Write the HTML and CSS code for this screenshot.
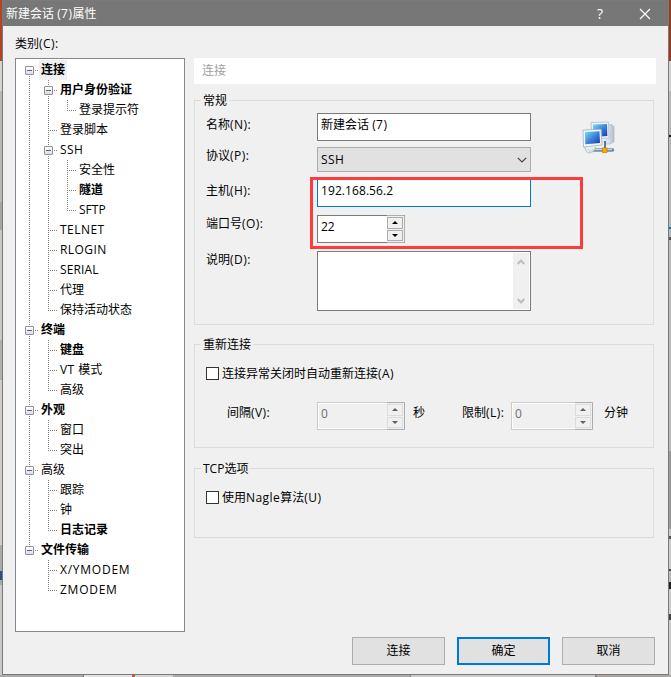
FILE: index.html
```html
<!DOCTYPE html>
<html lang="zh-CN">
<head>
<meta charset="utf-8">
<title>新建会话 (7)属性</title>
<link rel="stylesheet" href="styles.css">
</head>
<body>
<div class="desktop">
<div class="edge edge-left"></div>
<main class="dialog">
  <header class="titlebar">
    <span class="title">新建会话 <em>(7)</em>属性</span>
    <span class="help">?</span>
    <svg class="close" width="12" height="12" viewBox="0 0 12 12"><path d="M1 1 11 11M11 1 1 11" fill="none" stroke="#fff" stroke-width="1.2"/></svg>
  </header>
  <div class="content">
    <section class="sidebar">
      <div class="side-label">类别<em>(C):</em></div>
      <div class="tree">
        <div class="row b"><i class="g first box"></i><span class="sel">连接</span></div>
        <div class="row b"><i class="g v"></i><i class="g t box"></i><span>用户身份验证</span></div>
        <div class="row"><i class="g v"></i><i class="g v"></i><i class="g l"></i><span>登录提示符</span></div>
        <div class="row"><i class="g v"></i><i class="g t"></i><span>登录脚本</span></div>
        <div class="row"><i class="g v"></i><i class="g t box"></i><span><em>SSH</em></span></div>
        <div class="row"><i class="g v"></i><i class="g v"></i><i class="g t"></i><span>安全性</span></div>
        <div class="row b"><i class="g v"></i><i class="g v"></i><i class="g t"></i><span>隧道</span></div>
        <div class="row"><i class="g v"></i><i class="g v"></i><i class="g l"></i><span>SFTP</span></div>
        <div class="row"><i class="g v"></i><i class="g t"></i><span><em>TELNET</em></span></div>
        <div class="row"><i class="g v"></i><i class="g t"></i><span><em>RLOGIN</em></span></div>
        <div class="row"><i class="g v"></i><i class="g t"></i><span class="serial">SERIAL</span></div>
        <div class="row"><i class="g v"></i><i class="g t"></i><span>代理</span></div>
        <div class="row"><i class="g v"></i><i class="g l"></i><span>保持活动状态</span></div>
        <div class="row b"><i class="g t box"></i><span>终端</span></div>
        <div class="row b"><i class="g v"></i><i class="g t"></i><span>键盘</span></div>
        <div class="row"><i class="g v"></i><i class="g t"></i><span><em>VT </em>模式</span></div>
        <div class="row"><i class="g v"></i><i class="g l"></i><span>高级</span></div>
        <div class="row b"><i class="g t box"></i><span>外观</span></div>
        <div class="row"><i class="g v"></i><i class="g t"></i><span>窗口</span></div>
        <div class="row"><i class="g v"></i><i class="g l"></i><span>突出</span></div>
        <div class="row"><i class="g t box"></i><span>高级</span></div>
        <div class="row"><i class="g v"></i><i class="g t"></i><span>跟踪</span></div>
        <div class="row"><i class="g v"></i><i class="g t"></i><span>钟</span></div>
        <div class="row b"><i class="g v"></i><i class="g l"></i><span>日志记录</span></div>
        <div class="row b"><i class="g l box"></i><span>文件传输</span></div>
        <div class="row"><i class="g"></i><i class="g t"></i><span class="modem">X/YMODEM</span></div>
        <div class="row"><i class="g"></i><i class="g l"></i><span class="modem">ZMODEM</span></div>
      </div>
    </section>
    <section class="panel">
      <div class="page-title">连接</div>
      <div class="group general">
        <div class="legend">常规</div>
        <div class="general-body">
          <div class="fields">
            <div class="field name"><label>名称<em>(N):</em></label><div class="input">新建会话 <em>(7)</em></div></div>
            <div class="field protocol"><label>协议<em>(P):</em></label><div class="select"><span><em>SSH</em></span><svg width="10" height="6" viewBox="0 0 10 6"><path d="M.8.8 5 5 9.2.8" fill="none" stroke="#444" stroke-width="1.2"/></svg></div></div>
            <div class="field host"><label>主机<em>(H):</em></label><div class="input focus ip">192.168.56.2</div></div>
            <div class="field port"><label>端口号<em>(O):</em></label><div class="spin"><span>22</span><div class="arrows"><b class="up"></b><b class="down"></b></div></div></div>
            <div class="field desc"><label>说明<em>(D):</em></label><div class="textarea"><div class="scroll">
              <svg width="8" height="6" viewBox="0 0 8 6"><path d="M.7 5 4 1.5 7.3 5" fill="none" stroke="#bdbdbd" stroke-width="2"/></svg>
              <svg width="8" height="6" viewBox="0 0 8 6"><path d="M.7 1 4 4.5 7.3 1" fill="none" stroke="#bdbdbd" stroke-width="2"/></svg>
            </div></div></div>
          </div>
          <svg class="net-icon" width="34" height="34" viewBox="0 0 34 34">
            <defs>
              <linearGradient id="screen" x1="0" y1="0" x2="1" y2="1"><stop offset="0" stop-color="#7ddcf8"/><stop offset=".5" stop-color="#3f86dc"/><stop offset="1" stop-color="#1637ae"/></linearGradient>
              <linearGradient id="tower" x1="0" y1="0" x2="1" y2="0"><stop offset="0" stop-color="#eef3f7"/><stop offset="1" stop-color="#a9bccb"/></linearGradient>
            </defs>
            <path d="M25 4 30 3.5 32 5.5V21L28 23H24Z" fill="url(#tower)" stroke="#b1c0cc" stroke-width=".8"/>
            <path d="M28 9h3M28 12h3M28 15h3" stroke="#bdcbd6" stroke-width=".8"/>
            <path d="M9 1.5 26.5 1 27 17 10 18Z" fill="#edf3f8" stroke="#b3c4d1" stroke-width=".9"/>
            <path d="M11 3.5 25 3 25.3 15 11 16Z" fill="url(#screen)"/>
            <path d="M19 19h8v3h-8Z" fill="#dce5eb"/>
            <path d="M23 20v7" stroke="#527c9b" stroke-width="2"/>
            <path d="M10 29H30.5" stroke="#6d8ca1" stroke-width="3.6" stroke-linecap="round"/>
            <path d="M11 28.5H30" stroke="#c7d8e3" stroke-width="1.2"/>
            <path d="M3 26C3 34 12 33.5 13.5 26" fill="#e7eef3" stroke="#a3b5c2" stroke-width=".9"/>
            <path d="M6 28C7 31 10 31 11 28" fill="none" stroke="#b4c4cf" stroke-width=".9"/>
            <path d="M1 9 19 8.3 20 24 1.5 26Z" fill="#f3f7fa" stroke="#a5b9c8" stroke-width=".9"/>
            <path d="M3 11 17.5 10.3 18 22 3.3 23.3Z" fill="url(#screen)"/>
            <rect x="20.5" y="27" width="4.5" height="4.5" fill="#ffab08" stroke="#de7c00" stroke-width=".8"/>
          </svg>
        </div>
        <div class="highlight"></div>
      </div>
      <div class="group reconnect">
        <div class="legend">重新连接</div>
        <div class="check"><i></i><span>连接异常关闭时自动重新连接<em>(A)</em></span></div>
        <div class="limits">
          <span class="interval">间隔<em>(V):</em></span>
          <div class="spin off"><span>0</span><div class="arrows"><b class="up"></b><b class="down"></b></div></div>
          <span class="seconds">秒</span>
          <span class="limit">限制<em>(L):</em></span>
          <div class="spin off narrow"><span>0</span><div class="arrows"><b class="up"></b><b class="down"></b></div></div>
          <span class="minutes">分钟</span>
        </div>
      </div>
      <div class="group tcp">
        <div class="legend">TCP选项</div>
        <div class="check"><i></i><span>使用<em>Nagle</em>算法<em>(U)</em></span></div>
      </div>
    </section>
  </div>
  <footer class="actions">
    <div class="button">连接</div><div class="button default">确定</div><div class="button">取消</div>
  </footer>
</main>
<div class="edge edge-right"></div>
<div class="edge-bottom"></div>
</div>
</body>
</html>
```
FILE: styles.css
```css
*, *::before { box-sizing: border-box; }
body {
  margin: 0;
  overflow: hidden;
  font: 12px/16px "Open Sans", "Noto Sans CJK SC", sans-serif;
  color: #000;
}
em { font-style: normal; letter-spacing: .45px; }
.desktop {
  display: grid;
  grid-template: 675px 2px / 2px 667px 2px;
  width: 671px;
  height: 677px;
}
.edge-left {
  background: linear-gradient(#b44223 0 61px, #d2d2d2 61px 91px, #b8b8b8 91px 202px, #a5a5a5 202px 230px, #c9c9c9 230px 340px, #b0b0b0 340px 380px, #d0cdca 380px 545px, #aaa 545px 571px, #314b85 571px 580px, #aaa 580px 585px, #c9c9c9 585px);
}
.edge-right {
  background: linear-gradient(#99391f 0 61px, #d2d2d2 61px 91px, #b8b8b8 91px 135px, #111 135px 137px, #b8b8b8 137px 227px, #0074c7 227px 229px, #b8b8b8 229px 237px, #555 237px 240px, #bbb 240px 451px, #999 451px 529px, #ccc 529px 536px, #555 536px 539px, #ccc 539px 569px, #444 569px 571px, #bbb 571px 582px, #222 582px 589px, #ccc 589px 614px, #444 614px 620px, #ccc 620px);
}
.edge-bottom {
  grid-column: 1 / -1;
  background: linear-gradient(90deg, #aaa 0 83px, #777 83px 84px, #e2e2e2 84px 132px, #c95631 132px 135px, #d5d5d5 135px 173px, #aaa 173px 410px, #888 410px 411px, #cbcbcb 411px 595px, #888 595px 597px, #aaa59f 597px);
}
.dialog {
  display: flex;
  flex-direction: column;
  background: #f0f0f0;
  border: 1px solid #7a7a7a;
}
.titlebar {
  display: flex;
  align-items: center;
  height: 25px;
  padding-left: 3px;
  background: #777;
  color: #fff;
}
.title { flex: 1; }
.help { width: 42px; font-size: 14px; }
.close { margin-right: 17px; }
.content { display: flex; gap: 9px; padding: 10px 0 0 12px; }
.sidebar { width: 170px; }
.side-label { height: 22px; }
.tree {
  height: 574px;
  padding: 1px 0 0 4px;
  background: #fff;
  border: 1px solid #828790;
}
.row { display: flex; height: 20px; line-height: 19px; white-space: nowrap; }
.row span { padding: 0 2px; }
.b { font-weight: 700; }
.modem { letter-spacing: .75px; }
.serial { letter-spacing: .15px; }
.ip { letter-spacing: .08px; }
.sel { background: #f0f0f0; }
.g {
  --v: repeating-linear-gradient(#808080 0 1px, transparent 1px 2px);
  --h: repeating-linear-gradient(90deg, #808080 0 1px, transparent 1px 2px);
  width: 19px;
  height: 20px;
  background-repeat: no-repeat;
}
.v { background-image: var(--v); background-size: 1px 20px; background-position: 9px 0; }
.t { background-image: var(--v), var(--h); background-size: 1px 20px, 9px 1px; background-position: 9px 0, 9px 10px; }
.l { background-image: var(--v), var(--h); background-size: 1px 10px, 9px 1px; background-position: 9px 0, 9px 10px; }
.first { background-image: var(--v), var(--h); background-size: 1px 10px, 9px 1px; background-position: 9px 10px, 9px 10px; }
.box::before {
  content: "";
  display: block;
  width: 9px;
  height: 9px;
  margin: 6px 0 0 5px;
  border: 1px solid #919191;
  border-radius: 1px;
  background: linear-gradient(#4b63a7, #4b63a7) 1px 3px / 5px 1px no-repeat, linear-gradient(#fff, #ddd);
}
.panel { width: 462px; padding-top: 22px; }
.page-title { height: 26px; padding: 5px 8px; background: #fff; color: #a0a0a0; }
.group { position: relative; width: 460px; border: 1px solid #dcdcdc; }
.legend { width: max-content; height: 16px; line-height: 18px; margin: -9px 0 0 6px; padding: 0 2px; background: #f0f0f0; }
.general { height: 225px; margin-top: 16px; }
.reconnect { height: 104px; margin-top: 19px; }
.tcp { height: 70px; margin-top: 20px; }
.general-body { display: flex; padding: 5px 0 0 11px; }
.fields { display: flex; flex-direction: column; width: 325px; }
.field { display: flex; }
.field label { width: 111px; padding-top: 4px; }
.protocol { margin-top: 6px; }
.host { margin-top: 7px; }
.port, .desc { margin-top: 8px; }
.protocol label, .port label, .desc label { padding-top: 1px; }
.input { width: 214px; height: 28px; padding: 3px; background: #fff; border: 1px solid #7a7a7a; }
.focus { border-color: #0078d7; }
.select {
  display: flex;
  align-items: center;
  justify-content: space-between;
  width: 214px;
  height: 25px;
  padding: 0 3px;
  background: #e1e1e1;
  border: 1px solid #adadad;
}
.spin { display: flex; width: 88px; height: 28px; background: #fff; border: 1px solid #7a7a7a; border-right-color: #adb0b5; }
.spin > span { flex: 1; padding: 3px; }
.arrows { display: flex; flex-direction: column; gap: 1px; width: 17px; margin: -1px 0; padding: 1px 1px 1px 0; border: solid #abadb3; border-width: 1px 0; background: #f0f0f0; }
.arrows b { display: flex; flex: 1; align-items: center; justify-content: center; border: 1px solid #adadad; background: #f0f0f0; }
.arrows b::before { content: ""; border: solid transparent; border-width: 0 3px; }
.arrows .up::before { border-bottom: 3px solid #000; }
.arrows .down::before { border-top: 3px solid #000; }
.off { background: #f0f0f0; border-color: #ccc; border-right-color: #abadb3; color: #6d6d6d; box-shadow: inset 0 0 0 1px #fff; }
.off .arrows b { border-color: #dcdcdc; }
.off .up::before { border-bottom-color: #606060; }
.off .down::before { border-top-color: #606060; }
.textarea { display: flex; justify-content: flex-end; width: 214px; height: 60px; padding: 1px; background: #fff; border: 1px solid #7a7a7a; }
.scroll { display: flex; flex-direction: column; justify-content: space-between; align-items: center; width: 16px; padding: 6px 0 5px; background: #f0f0f0; }
.net-icon { margin: 8px 0 0 51px; }
.highlight { position: absolute; left: 115px; top: 76px; width: 273px; height: 72px; border: 3px solid #ff3b3b; }
.check { display: flex; align-items: center; gap: 3px; height: 16px; margin: 14px 0 0 11px; }
.check i { width: 13px; height: 13px; margin-bottom: 1px; background: #fff; border: 1px solid #333; }
.limits { display: flex; margin: 20px 0 0 32px; }
.limits > span { padding-top: 3px; }
.interval { width: 90px; }
.seconds { width: 49px; margin-left: 8px; }
.limit { width: 49px; }
.narrow { width: 82px; }
.minutes { margin-left: 11px; }
.actions { display: flex; justify-content: flex-end; gap: 12px; margin-top: 5px; padding-right: 13px; }
.button { width: 93px; height: 28px; line-height: 25px; text-align: center; background: #e1e1e1; border: 1px solid #adadad; }
.default { border: 2px solid #0078d7; line-height: 23px; }
```
